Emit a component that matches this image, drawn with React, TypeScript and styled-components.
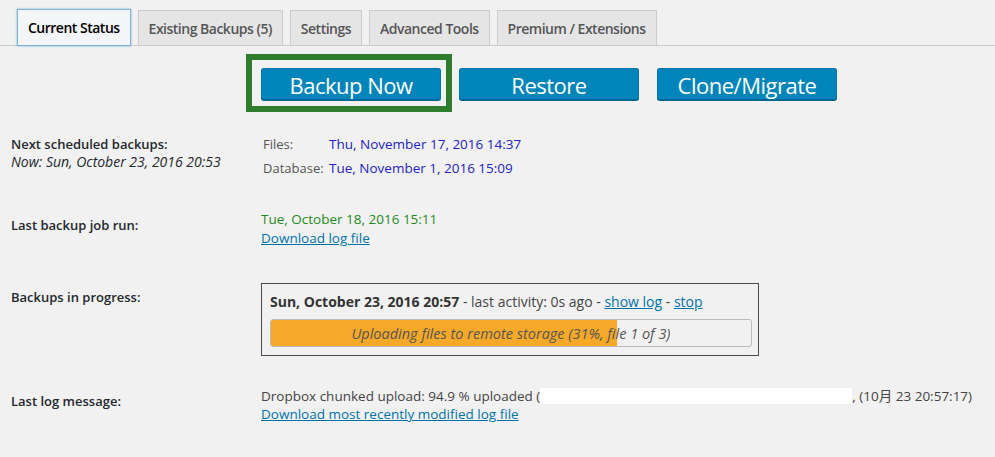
import React from "react";
import styled, { createGlobalStyle, css } from "styled-components";

const GlobalStyle = createGlobalStyle`
  html, body {
    margin: 0;
    padding: 0;
    background: #f1f1f1;
  }
  body {
    font-family: "Open Sans", "Noto Sans", "Noto Sans CJK JP", sans-serif;
    font-size: 13.5px;
    color: #444;
  }
`;

const Page = styled.div`
  width: 995px;
  height: 457px;
  overflow: hidden;
  padding-top: 10px;
  box-sizing: border-box;
`;

const TabBar = styled.nav`
  display: flex;
  gap: 7px;
  padding-left: 17px;
  border-bottom: 1px solid #ccc;
  height: 35px;
`;

const Tab = styled.a<{ active?: boolean }>`
  display: flex;
  align-items: center;
  justify-content: center;
  box-sizing: border-box;
  height: 36px;
  padding: 0 10px;
  border: 1px solid #ccc;
  background: #e5e5e5;
  color: #555;
  font-size: 14px;
  font-weight: 600;
  letter-spacing: -0.5px;
  text-decoration: none;
  white-space: nowrap;
  ${(p) =>
    p.active &&
    css`
      margin-top: -1px;
      height: 37px;
      background: #f4f5f7;
      color: #000;
      border-color: #7fb0de;
      box-shadow: 0 0 2px rgba(30, 140, 190, 0.6);
    `}
`;

const ActionRow = styled.div`
  display: flex;
  gap: 18px;
  padding-left: 261px;
  margin-top: 22px;
`;

const ActionButton = styled.button<{ marked?: boolean }>`
  position: relative;
  width: 180px;
  height: 32px;
  box-sizing: border-box;
  border: 1px solid #0073aa;
  border-bottom-color: #006799;
  border-radius: 3px;
  background: #0085ba;
  box-shadow: 0 1px 0 #006799;
  color: #fff;
  font-family: "Open Sans", "Noto Sans", sans-serif;
  font-size: 22px;
  letter-spacing: -0.5px;
  line-height: 28px;
  padding: 2px 0 0;
  cursor: pointer;
  ${(p) =>
    p.marked &&
    css`
      &::after {
        content: "";
        position: absolute;
        top: -15px;
        left: -16px;
        right: -12px;
        bottom: -13px;
        border: 6px solid #2d7d2d;
        pointer-events: none;
      }
    `}
`;

const Row = styled.div<{ top: number }>`
  display: flex;
  align-items: flex-start;
  margin-top: ${(p) => p.top}px;
`;

const Label = styled.div<{ offset: number }>`
  box-sizing: border-box;
  width: 261px;
  padding-left: 11px;
  padding-top: ${(p) => p.offset}px;
  font-weight: 600;
  color: #23282d;
  line-height: 17px;
  font-size: 13px;
`;

const Note = styled.div`
  font-style: italic;
  font-weight: 400;
  font-size: 14px;
`;

const Value = styled.div<{ lh: number }>`
  line-height: ${(p) => p.lh}px;
  white-space: nowrap;
`;

const ScheduleGrid = styled.div`
  display: grid;
  grid-template-columns: 66px auto;
  line-height: 24px;
  padding-left: 2px;
`;

const Muted = styled.span`
  color: #555;
  font-size: 13px;
`;

const When = styled.span<{ tone: "blue" | "green" }>`
  color: ${(p) => (p.tone === "blue" ? "#2323c2" : "#1f8a24")};
`;

const Link = styled.a`
  color: #0073aa;
  text-decoration: underline;
  cursor: pointer;
`;

const JobBox = styled.div`
  width: 498px;
  box-sizing: border-box;
  border: 1px solid #4a4a4a;
  padding: 9px 6px 8px 8px;
`;

const JobLine = styled.div`
  line-height: 18px;
  font-size: 14px;
  white-space: nowrap;
`;

const Strong = styled.strong`
  font-weight: 700;
  color: #333;
`;

const Bar = styled.div`
  position: relative;
  margin-top: 8px;
  height: 28px;
  box-sizing: border-box;
  border: 1px solid #bbb;
  border-radius: 3px;
  background: #f1f1f1;
  overflow: hidden;
`;

const BarFill = styled.div`
  height: 100%;
  background: #f6a828;
`;

const BarText = styled.div`
  position: absolute;
  inset: 0;
  display: flex;
  align-items: center;
  justify-content: center;
  font-style: italic;
  color: #555;
  font-size: 14.5px;
`;

const Redacted = styled.span`
  display: inline-block;
  width: 312px;
  height: 16px;
  background: #fff;
  vertical-align: -3px;
`;

const tabs = [
  "Current Status",
  "Existing Backups (5)",
  "Settings",
  "Advanced Tools",
  "Premium / Extensions",
];

const progress = 72;

export default function App() {
  return (
    <Page>
      <GlobalStyle />
      <TabBar>
        {tabs.map((t, i) => (
          <Tab key={t} active={i === 0}>
            {t}
          </Tab>
        ))}
      </TabBar>

      <ActionRow>
        <ActionButton marked>Backup Now</ActionButton>
        <ActionButton>Restore</ActionButton>
        <ActionButton>Clone/Migrate</ActionButton>
      </ActionRow>

      <Row top={32}>
        <Label offset={4}>
          Next scheduled backups:
          <Note>Now: Sun, October 23, 2016 20:53</Note>
        </Label>
        <ScheduleGrid>
          <Muted>Files:</Muted>
          <When tone="blue">Thu, November 17, 2016 14:37</When>
          <Muted>Database:</Muted>
          <When tone="blue">Tue, November 1, 2016 15:09</When>
        </ScheduleGrid>
      </Row>

      <Row top={30}>
        <Label offset={7}>Last backup job run:</Label>
        <Value lh={19}>
          <When tone="green">Tue, October 18, 2016 15:11</When>
          <br />
          <Link>Download log file</Link>
        </Value>
      </Row>

      <Row top={35}>
        <Label offset={6}>Backups in progress:</Label>
        <JobBox>
          <JobLine>
            <Strong>Sun, October 23, 2016 20:57</Strong> - last activity: 0s ago -{" "}
            <Link>show log</Link> - <Link>stop</Link>
          </JobLine>
          <Bar>
            <BarFill style={{ width: `${progress}%` }} />
            <BarText>Uploading files to remote storage (31%, file 1 of 3)</BarText>
          </Bar>
        </JobBox>
      </Row>

      <Row top={31}>
        <Label offset={6}>Last log message:</Label>
        <Value lh={18}>
          Dropbox chunked upload: 94.9 % uploaded (<Redacted />, (10月 23 20:57:17)
          <br />
          <Link>Download most recently modified log file</Link>
        </Value>
      </Row>
    </Page>
  );
}
